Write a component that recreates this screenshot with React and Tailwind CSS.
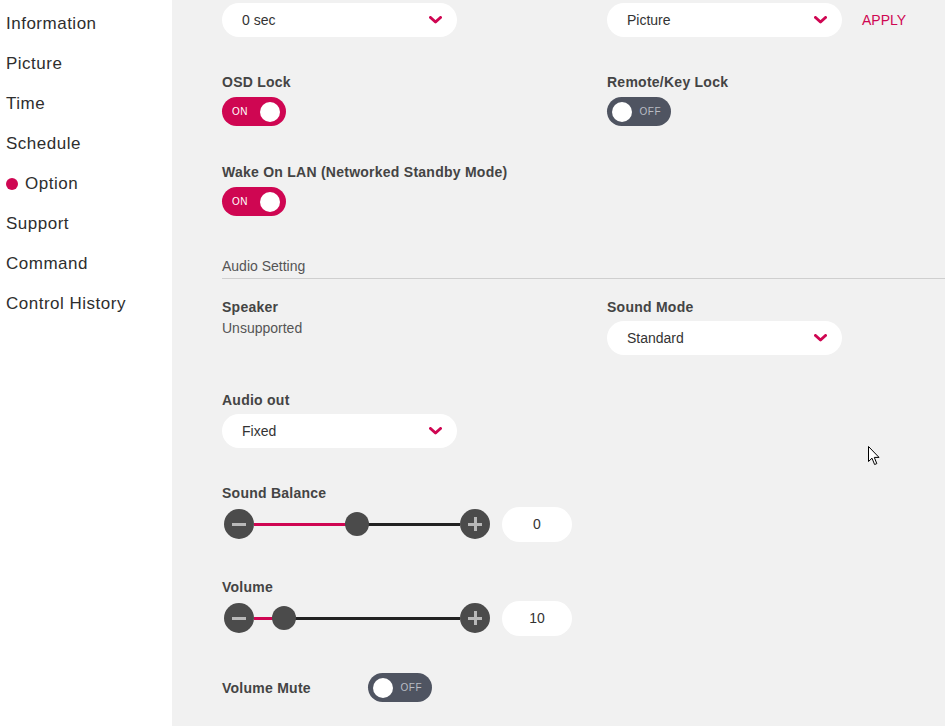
import React from "react";

const PINK = "#cf0652";

const menu = ["Information", "Picture", "Time", "Schedule", "Option", "Support", "Command", "Control History"];

const Chevron = () => (
  <svg width="13" height="8" viewBox="0 0 13 8" className="shrink-0">
    <path d="M1.5 1.5 L6.5 6 L11.5 1.5" fill="none" stroke={PINK} strokeWidth="3" strokeLinecap="round" strokeLinejoin="round" />
  </svg>
);

const Select = ({ value }) => (
  <div className="flex items-center justify-between w-[235px] h-[34px] bg-white rounded-full pl-5 pr-[15px] text-[14px] text-[#333]">
    <span>{value}</span>
    <Chevron />
  </div>
);

const Label = ({ children }) => (
  <div className="h-4 leading-4 text-[14px] font-bold text-[#444] tracking-[0.25px]">{children}</div>
);

const Toggle = ({ on }) =>
  on ? (
    <div className="flex items-center justify-between w-16 h-[29px] rounded-full pl-[10px] pr-[6px]" style={{ backgroundColor: PINK }}>
      <span className="text-[10px] text-white tracking-[0.5px]">ON</span>
      <span className="w-5 h-5 rounded-full bg-white" />
    </div>
  ) : (
    <div className="flex items-center justify-between w-16 h-[29px] rounded-full bg-[#4f5461] pl-[5px] pr-[10px]">
      <span className="w-5 h-5 rounded-full bg-white" />
      <span className="text-[10px] text-[#b9bcc4] tracking-[0.5px]">OFF</span>
    </div>
  );

const RoundBtn = ({ plus }) => (
  <div className="relative w-[30px] h-[30px] rounded-full bg-[#4b4b4b] shrink-0 flex items-center justify-center">
    <span className="absolute w-[14px] h-[3px] bg-[#b8b8b8]" />
    {plus && <span className="absolute w-[3px] h-[14px] bg-[#b8b8b8]" />}
  </div>
);

const Slider = ({ frac, value }) => {
  const width = 206;
  const thumb = 24;
  const pos = frac * (width - thumb) + thumb / 2;
  return (
    <div className="flex items-center h-[30px] ml-[2px]">
      <RoundBtn />
      <div className="relative w-[206px] h-[30px]">
        <div className="absolute left-0 right-0 top-[14px] h-[3px] bg-[#222]" />
        <div className="absolute left-0 top-[14px] h-[3px]" style={{ width: pos, backgroundColor: PINK }} />
        <div
          className="absolute top-[3px] w-6 h-6 rounded-full bg-[#4b4b4b]"
          style={{ left: pos - thumb / 2 }}
        />
      </div>
      <RoundBtn plus />
      <div className="ml-3 w-[70px] h-[35px] bg-white rounded-full flex items-center justify-center text-[14px] text-[#333]">
        {value}
      </div>
    </div>
  );
};

export default function App() {
  return (
    <div className="relative flex w-[945px] h-[726px] overflow-hidden bg-[#f1f1f1] font-['Liberation_Sans',Arial,sans-serif]">
      <aside className="w-[172px] shrink-0 bg-white pt-[4px]">
        {menu.map((m) => (
          <div key={m} className="h-10 flex items-center pl-[6px] text-[17px] tracking-[0.5px] text-[#2e2e2e]">
            {m === "Option" && <span className="w-3 h-3 rounded-full mr-[7px]" style={{ backgroundColor: PINK }} />}
            {m}
          </div>
        ))}
      </aside>

      <main className="flex-1 pl-[50px] pt-[3px]">
        <div className="flex items-center">
          <div className="w-[385px]">
            <Select value="0 sec" />
          </div>
          <Select value="Picture" />
          <span className="ml-5 text-[14px]" style={{ color: PINK }}>APPLY</span>
        </div>

        <div className="flex mt-[37px]">
          <div className="w-[385px]">
            <Label>OSD Lock</Label>
            <div className="mt-[7px]">
              <Toggle on />
            </div>
          </div>
          <div>
            <Label>Remote/Key Lock</Label>
            <div className="mt-[7px]">
              <Toggle />
            </div>
          </div>
        </div>

        <div className="mt-[38px]">
          <Label>Wake On LAN (Networked Standby Mode)</Label>
          <div className="mt-[7px]">
            <Toggle on />
          </div>
        </div>

        <div className="mt-[42px] h-4 leading-4 text-[14px] text-[#555]">Audio Setting</div>
        <div className="mt-[4px] h-px bg-[#cfcfcf]" />

        <div className="flex mt-[20px]">
          <div className="w-[385px]">
            <Label>Speaker</Label>
            <div className="mt-[5px] h-4 leading-4 text-[14px] text-[#555]">Unsupported</div>
          </div>
          <div>
            <Label>Sound Mode</Label>
            <div className="mt-[6px]">
              <Select value="Standard" />
            </div>
          </div>
        </div>

        <div className="mt-[37px]">
          <Label>Audio out</Label>
          <div className="mt-[6px]">
            <Select value="Fixed" />
          </div>
        </div>

        <div className="mt-[37px]">
          <Label>Sound Balance</Label>
          <div className="mt-[8px]">
            <Slider frac={0.5} value="0" />
          </div>
        </div>

        <div className="mt-[40px]">
          <Label>Volume</Label>
          <div className="mt-[8px]">
            <Slider frac={0.1} value="10" />
          </div>
        </div>

        <div className="flex items-center mt-[40px]">
          <div className="w-[146px]">
            <Label>Volume Mute</Label>
          </div>
          <Toggle />
        </div>
      </main>

      <svg className="absolute left-[868px] top-[446px]" width="13" height="20" viewBox="0 0 13 20">
        <path d="M0.5 0.5 L0.5 15.5 L4 12.2 L6.6 18.5 L8.8 17.6 L6.3 11.4 L11 11.4 Z" fill="#fff" stroke="#000" strokeWidth="1" />
      </svg>
    </div>
  );
}
